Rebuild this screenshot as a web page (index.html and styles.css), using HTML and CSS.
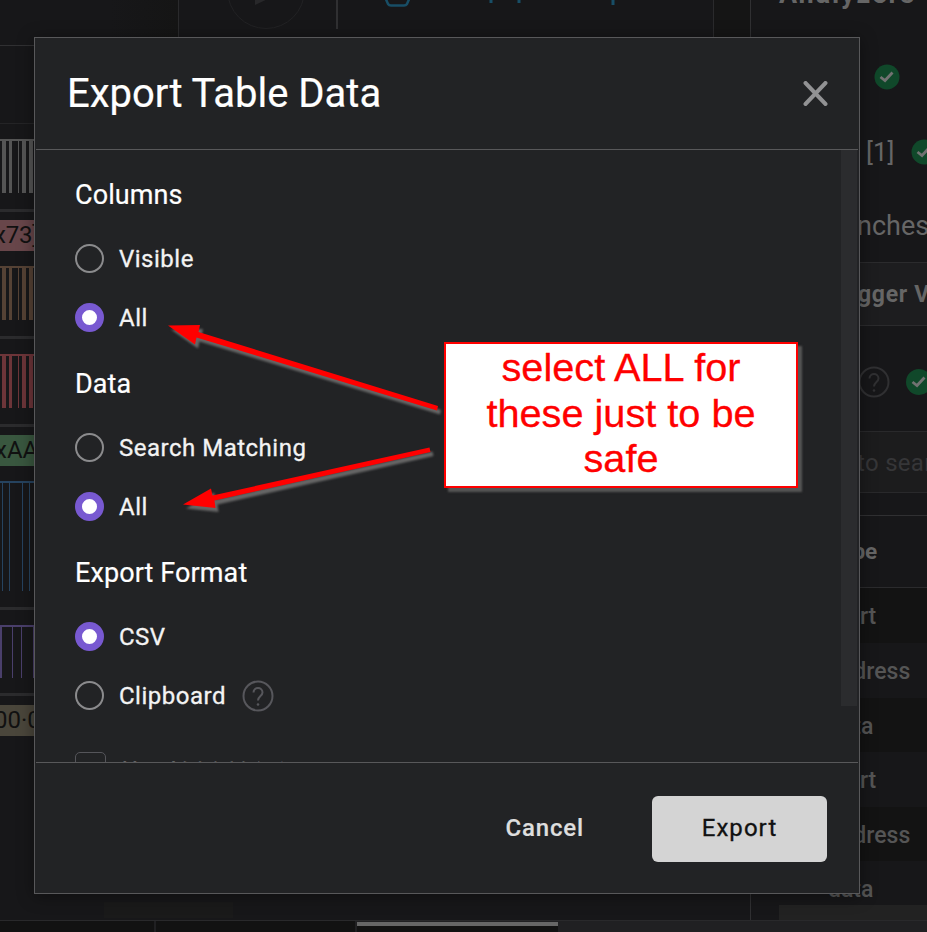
FILE: index.html
```
<!DOCTYPE html>
<html lang="en">
<head>
<meta charset="utf-8">
<title>Export Table Data</title>
<link rel="stylesheet" href="styles.css">
</head>
<body>
<div class="app">
  <div class="workspace">
    <section class="channels">
      <div class="channels-top"></div>
      <div class="ruler"></div>
      <div class="track"><div class="wave gray"></div></div>
      <div class="track bubble-track"><div class="bubble rose">x73]</div><div class="wave brown"></div></div>
      <div class="track"><div class="wave red"></div></div>
      <div class="track bubble-track"><div class="bubble green">xAA</div><div class="wave blue"></div></div>
      <div class="track"><div class="wave purple"></div></div>
      <div class="bubble olive">00·0</div>
      <div class="hint"></div>
    </section>
    <section class="center">
      <svg class="toolbar" width="535" height="37" viewBox="179 0 535 37" fill="none">
        <circle cx="266" cy="-10" r="38.5" stroke="#222224"/>
        <path d="M255-8V5L272-3" fill="#28282a"/>
        <path d="M337 0V29" stroke="#303032" stroke-width="2"/>
        <path d="M385-3L388 4Q389 5.500 391 5.500H404Q406 5.500 407 4L410-3" stroke="#184e66" stroke-width="2.500"/>
        <path d="M491 0V3M519 0V3M613 0V5" stroke="#184e66" stroke-width="3"/>
      </svg>
    </section>
    <div class="gutter"></div>
    <aside class="side">
      <div class="side-title">Analyzers</div>
      <div class="item item-first"><svg class="ok" viewBox="0 0 26 26"><circle cx="13" cy="13" r="12.500"/><path d="M6.500 13L11 16.500L18.500 8.500"/></svg></div>
      <div class="item item-second"><span>[1]</span><svg class="ok" viewBox="0 0 26 26"><circle cx="13" cy="13" r="12.500"/><path d="M6.500 13L11 16.500L18.500 8.500"/></svg></div>
      <div class="item item-third">nches</div>
      <div class="trigger">gger View</div>
      <div class="item item-help">
        <svg class="help" viewBox="0 0 32 32"><circle cx="16" cy="16" r="14.500"/><path d="M11.500 12.500C11.500 6.500 20.500 6.500 20.500 12.500C20.500 16 16 16 16 20.500"/><circle class="dot" cx="16" cy="24.500" r="1.300"/></svg>
        <svg class="ok" viewBox="0 0 26 26"><circle cx="13" cy="13" r="13"/><path d="M6.500 13L11 16.500L18.500 8.500"/></svg>
      </div>
      <div class="search">to search</div>
      <div class="table">
        <div class="th">Type</div>
        <div class="tr">start</div>
        <div class="tr">address</div>
        <div class="tr">data</div>
        <div class="tr">start</div>
        <div class="tr">address</div>
        <div class="tr">data</div>
      </div>
      <div class="side-scroll"></div>
    </aside>
  </div>
  <div class="tabs"><div class="tab"></div><div class="tab"></div><div class="tab active"></div></div>
</div>

<div class="dialog">
  <header class="dialog-head">
    <h1>Export Table Data</h1>
    <svg class="close" viewBox="0 0 24 24"><path d="M2.500 2L21.500 22M21.500 2L2.500 22"/></svg>
  </header>
  <div class="dialog-body">
    <div class="form">
      <h2>Columns</h2>
      <label class="opt"><i class="radio"></i><span>Visible</span></label>
      <label class="opt"><i class="radio on"></i><span>All</span></label>
      <h2>Data</h2>
      <label class="opt"><i class="radio"></i><span>Search Matching</span></label>
      <label class="opt"><i class="radio on"></i><span>All</span></label>
      <h2>Export Format</h2>
      <label class="opt"><i class="radio on"></i><span>CSV</span></label>
      <label class="opt"><i class="radio"></i><span>Clipboard</span>
        <svg class="help" viewBox="0 0 32 32"><circle cx="16" cy="16" r="14.500"/><path d="M11.500 12.500C11.500 6.500 20.500 6.500 20.500 12.500C20.500 16 16 16 16 20.500"/><circle class="dot" cx="16" cy="24.500" r="1.300"/></svg>
      </label>
      <label class="opt last"><i class="check"></i><span>Use ISO8601 timestamps</span></label>
    </div>
    <div class="scrollbar"><div class="thumb"></div></div>
  </div>
  <footer class="dialog-foot">
    <span class="cancel">Cancel</span>
    <span class="export">Export</span>
  </footer>
</div>

<svg class="arrows" width="927" height="932" viewBox="0 0 927 932">
  <path d="M168 325.500L200 325L198.500 332L438 406L437 410.500L196.500 337.500L195 344.500Z"/>
  <path d="M183 504.500L211 488.500L212.500 495.500L429.500 447.500L430.500 452L214.500 500.500L215.500 508Z"/>
</svg>
<div class="note">select ALL for<br>these just to be<br>safe</div>
</body>
</html>
```
FILE: styles.css
```
* { box-sizing: border-box; }
body { margin: 0; width: 927px; height: 932px; overflow: hidden; position: relative; background: #171719; color: #666; font-family: Roboto, sans-serif; }
.app { height: 932px; display: flex; flex-direction: column; }
.workspace { height: 920px; display: flex; overflow: hidden; }

.channels { width: 178px; flex: none; background: linear-gradient(90deg, #171719 110px, #151515) 0 0 / 100% 40px no-repeat; }
.channels-top { height: 46px; border-bottom: 1px solid #303032; }
.ruler { height: 78px; border-bottom: 1px solid #242426; margin-bottom: 15px; }
.track { width: 34px; height: 73px; border-bottom: 3px solid #2b2b2d; margin-bottom: 15px; }
.track + .bubble-track { height: 119px; margin-top: -7px; }
.wave { height: 54px; border-top: 2px solid; background: linear-gradient(90deg, transparent 2px, currentColor 2px 6px, transparent 6px 9px, currentColor 9px 12px, transparent 12px 18px, currentColor 18px 19px, transparent 19px 22px, currentColor 22px 26px, transparent 26px 29px, currentColor 29px 33px, transparent 33px); }
.gray { color: #555; }
.brown { color: #554235; }
.red { color: #6d3539; }
.blue { color: #26435f; height: 110px; background: linear-gradient(90deg, transparent 2px, currentColor 2px 3px, transparent 3px 9px, currentColor 9px 10px, transparent 10px 22px, currentColor 22px 23px, transparent 23px 29px, currentColor 29px 30px, transparent 30px); }
.purple { color: #4a3f6b; height: 53px; background: linear-gradient(90deg, currentColor 2px, transparent 2px 12px, currentColor 12px 13px, transparent 13px 21px, currentColor 21px 22px, transparent 22px 33px, currentColor 33px); }
.bubble { width: 35px; height: 31px; margin-bottom: 15px; color: #111; font-size: 24px; line-height: 31px; white-space: nowrap; overflow: hidden; text-indent: -6px; }
.rose { background: #68464a; letter-spacing: -.200px; }
.green { background: #39573f; text-indent: -5px; }
.olive { background: #4a463b; margin-top: -6px; }
.track:has(.blue) { height: 175px; }
.track:has(.purple) { height: 71px; margin-top: 16px; }
.track:has(.blue) + .track { margin-top: 0; }
.hint { width: 129px; height: 16px; margin: 166px 0 0 104px; background: #1a1a1a; }

.center { width: 536px; flex: none; border: solid #2a2a2c; border-width: 0 1px; border-image: linear-gradient(#2a2a2c 40px, transparent 40px) 1; }
.toolbar { display: block; }
.gutter { width: 36px; flex: none; background: linear-gradient(#151515, #151515) 0 0 / 100% 40px no-repeat; }
.side { width: 177px; flex: none; border-left: 1px solid #303032; display: flex; flex-direction: column; overflow: hidden; }
.side-title { height: 40px; padding-left: 28px; font-weight: 700; font-size: 27px; line-height: 32px; letter-spacing: 1.900px; margin-top: -22px; }
.item { display: flex; align-items: center; font-size: 26px; flex: none; }
.item-first { height: 74px; margin-top: 22px; padding: 4px 0 0 123px; }
.item-second { height: 74px; padding: 5px 0 0 115px; gap: 17px; }
.item-third { height: 76px; padding: 4px 0 0 106px; font-size: 27px; }
.ok { width: 26px; height: 26px; flex: none; fill: #10482a; }
.ok path { fill: none; stroke: #727272; stroke-width: 2.800; }
.trigger { height: 64px; border: solid #2b2b2d; border-width: 1px 0; background: #1d1d1f; padding-left: 107px; font-weight: 700; font-size: 23px; line-height: 64px; letter-spacing: .700px; white-space: nowrap; }
.help { width: 32px; height: 32px; flex: none; fill: none; stroke: #57575c; stroke-width: 2; }
.help .dot { fill: #57575c; stroke: none; }
.side .help { stroke: #303032; }
.side .help .dot { fill: #303032; }
.item-help { height: 105px; padding: 7px 0 0 107px; gap: 16px; }
.search { height: 62px; border: solid #29292b; border-width: 1px 0; background: #1c1c1d; padding-left: 106px; color: #363638; font-size: 24px; line-height: 62px; letter-spacing: .300px; white-space: nowrap; }
.table { margin-top: 22px; border-top: 1px solid #303032; font-size: 23px; }
.th { height: 72px; padding-left: 77px; line-height: 70px; font-weight: 700; font-size: 22.500px; border-bottom: 1px solid #2b2b2d; }
.tr { height: 54.600px; padding-left: 77px; line-height: 57px; font-weight: 500; color: #555; }
.tr:nth-child(even) { background: #131313; }
.side-scroll { height: 15px; margin: -11px 0 0 28px; background: #222; position: relative; flex: none; }

.tabs { height: 12px; border-top: 1px solid #29292b; background: #202022; display: flex; gap: 2px; }
.tab { width: 199px; background: #121212; }
.tab:first-child { width: 154px; }
.tab.active { width: 201px; border-top: 4px solid #666; margin-top: 1px; }

.dialog { position: absolute; left: 34px; top: 37px; width: 826px; height: 857px; padding: 0 1px; border: 1px solid #58585a; background: #222325; box-shadow: 0 2px 16px rgba(0, 0, 0, .4); display: flex; flex-direction: column; color: #fff; }
.dialog-head { height: 112px; flex: none; display: flex; align-items: center; justify-content: space-between; padding: 0 30px 0 31px; border-bottom: 1px solid #58585a; }
h1, h2 { margin: 0; font-weight: 400; -webkit-text-stroke: .200px; }
h1 { font-size: 40px; line-height: 48px; }
.close { width: 25px; height: 25px; margin-top: -1px; fill: none; stroke: #929294; stroke-width: 4; stroke-linecap: round; }
.dialog-body { height: 612px; overflow: hidden; display: flex; justify-content: space-between; }
.form { padding: 29px 0 0 39px; }
h2 { height: 32px; margin-bottom: 18px; font-size: 27px; line-height: 32px; letter-spacing: .100px; }
.opt { height: 59px; display: flex; align-items: center; font-size: 24px; letter-spacing: .500px; color: #f3f3f3; white-space: nowrap; -webkit-text-stroke: .300px; }
.opt + h2 { margin-top: 21px; }
.radio { width: 29px; height: 29px; margin-right: 15px; border: 2px solid #8b8b8d; border-radius: 50%; flex: none; }
.on { border: 7.500px solid #7859d1; background: #fff; }
.opt .help { margin-left: 16px; }
.check { width: 31px; height: 31px; margin-right: 16px; border: 1px solid #55555a; border-radius: 5px; }
.last { margin-top: 13px; }
.last span { padding-top: 6px; letter-spacing: .400px; }
.scrollbar { width: 17px; }
.thumb { width: 16px; height: 556px; background: #2b2c2e; }
.dialog-foot { flex: 1; border-top: 1px solid #58585a; display: flex; justify-content: flex-end; padding: 33px 31px 0 0; }
.cancel { font-size: 24px; font-weight: 500; letter-spacing: .850px; line-height: 64px; color: #dedede; margin-right: 68px; -webkit-text-stroke: .200px; }
.export { width: 175px; height: 66px; border-radius: 6px; background: #d4d4d4; color: #111; text-align: center; line-height: 64px; font-size: 24px; letter-spacing: 1.050px; -webkit-text-stroke: .300px; }

.arrows { position: absolute; left: 0; top: 0; fill: #f00; filter: drop-shadow(3px 4px 1px #666); }
.note { position: absolute; left: 444px; top: 342px; width: 354px; height: 146px; padding-top: 1px; border: 2px solid #f00; background: #fff; color: #f00; font: 39.700px/45.500px "Liberation Sans", Arial, sans-serif; text-align: center; box-shadow: 4px 4px 2px #555; -webkit-text-stroke: .300px; }
```
